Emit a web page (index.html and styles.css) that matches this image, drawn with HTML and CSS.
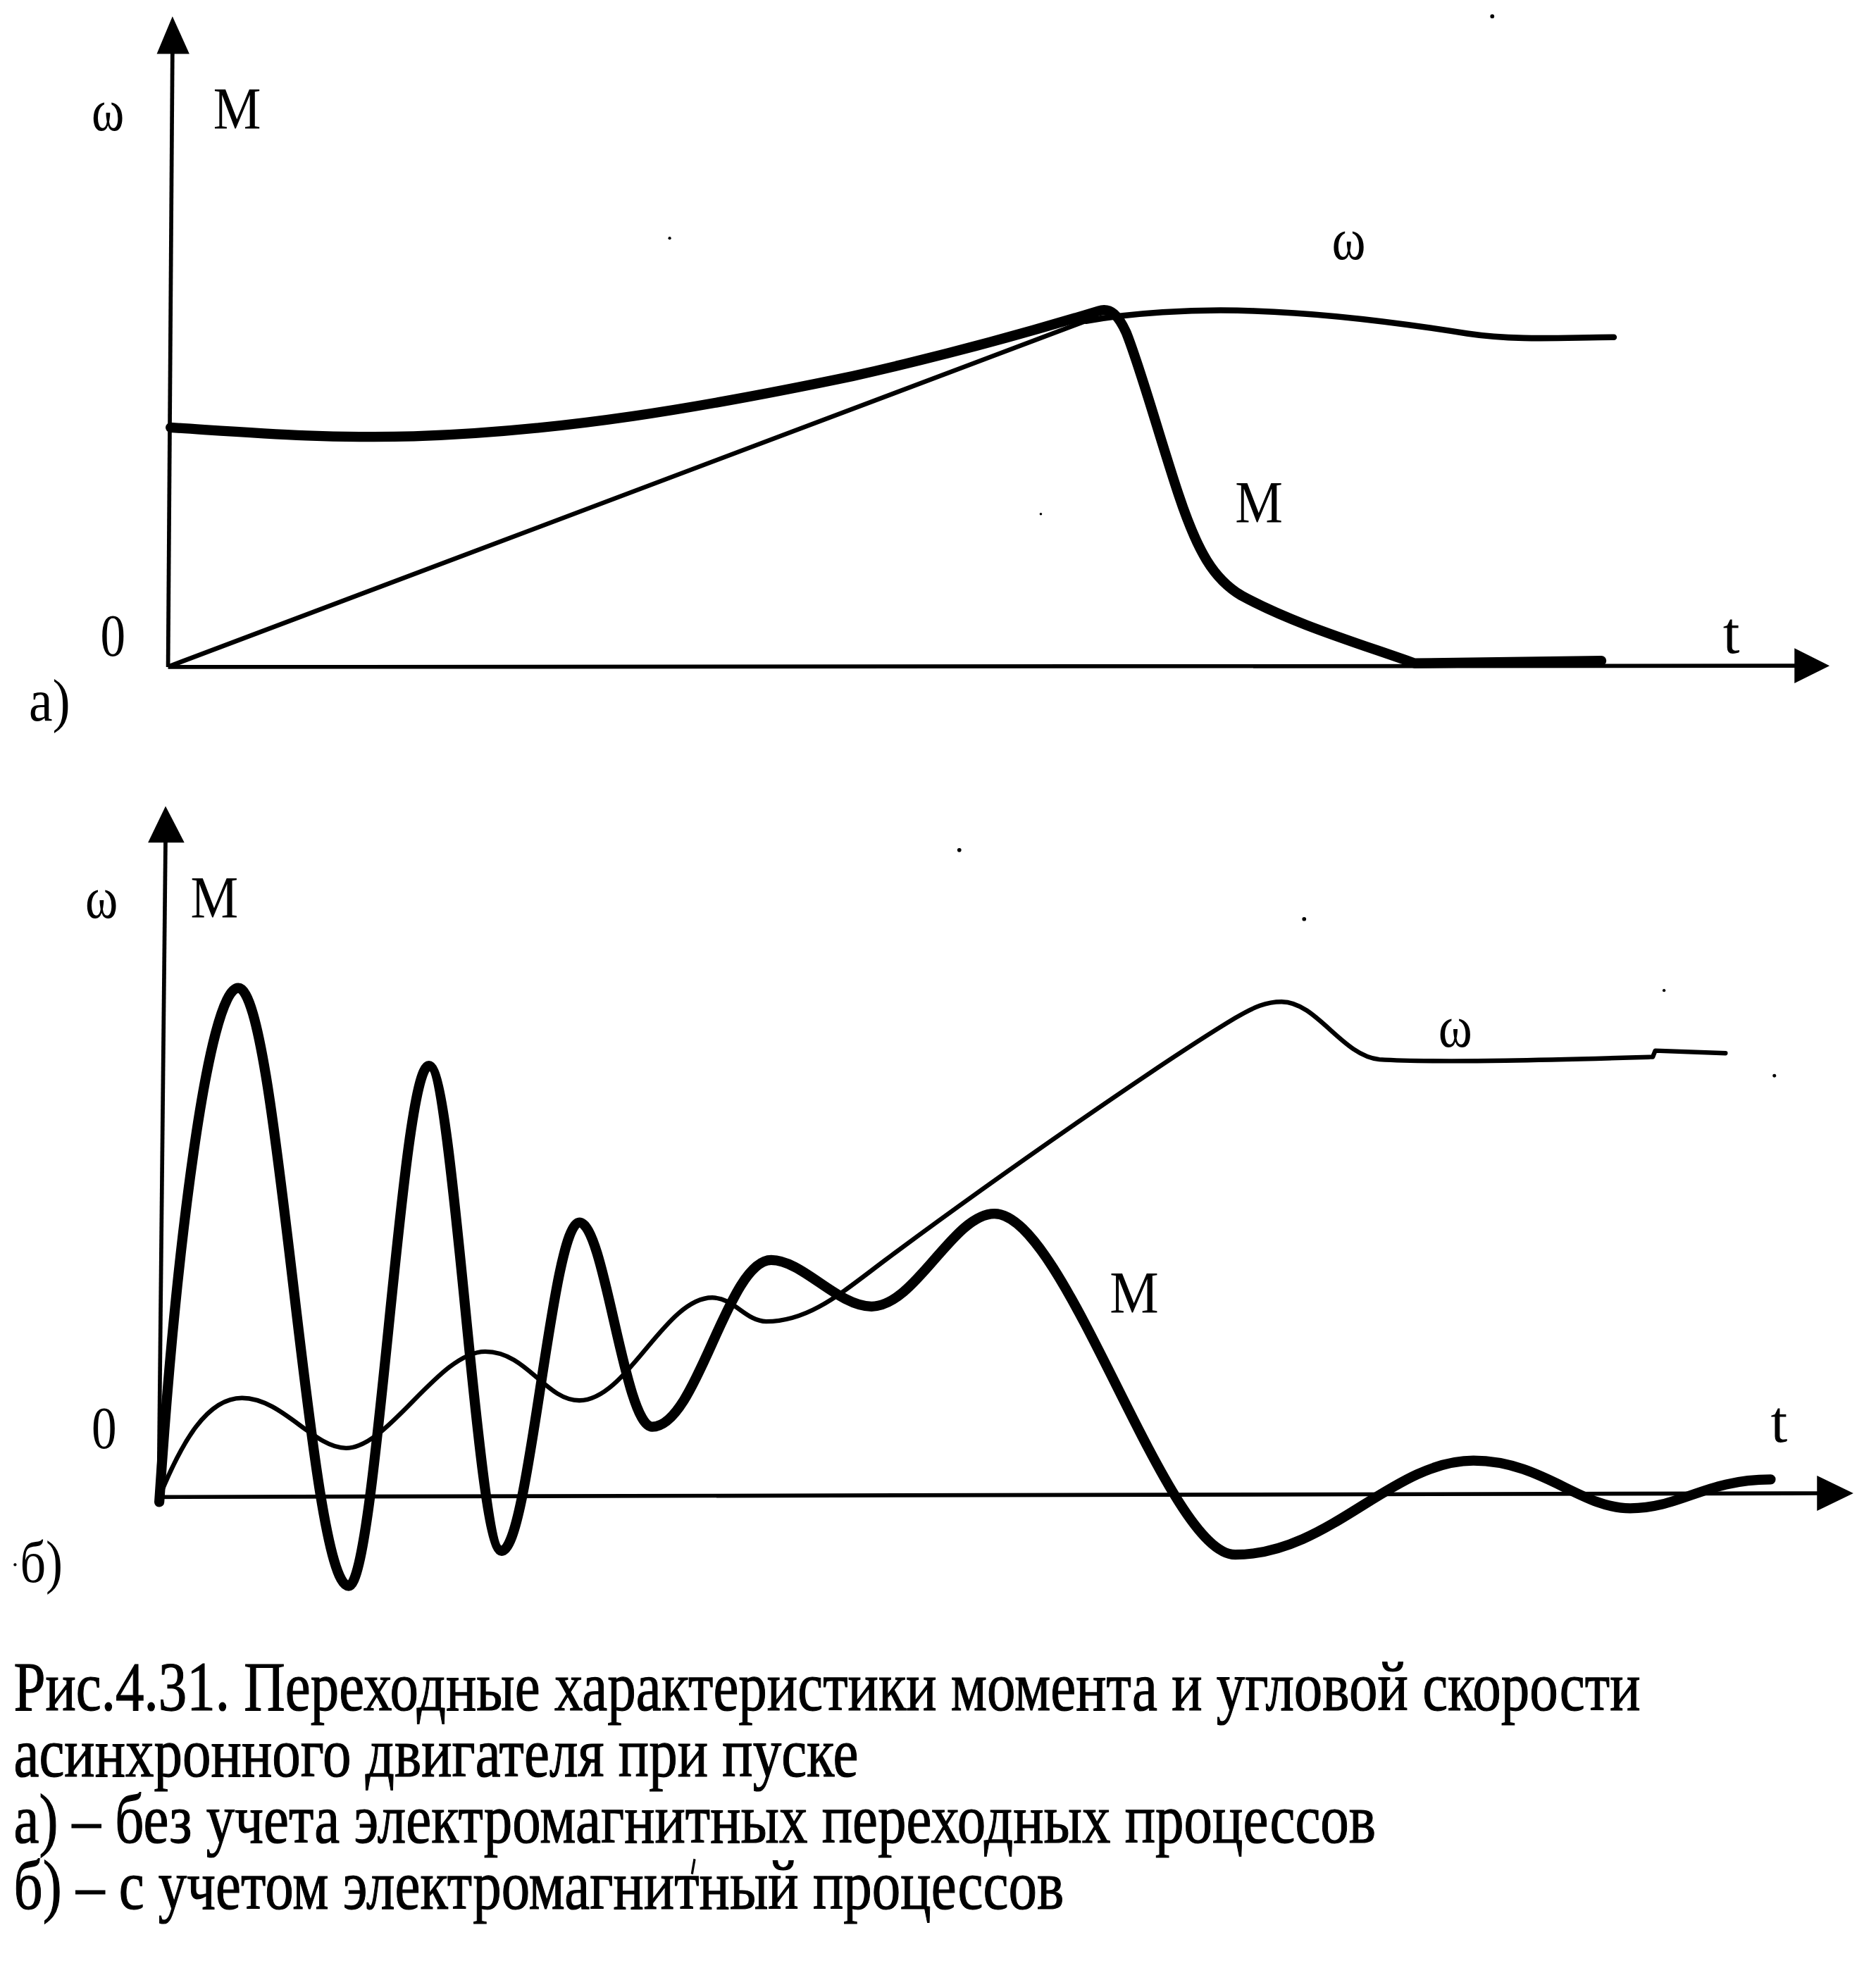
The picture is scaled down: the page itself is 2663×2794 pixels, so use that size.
FILE: index.html
```html
<!DOCTYPE html>
<html lang="ru">
<head>
<meta charset="utf-8">
<title>Рис.4.31</title>
<link rel="stylesheet" href="styles.css">
</head>
<body>
<figure class="fig">
  <svg class="chart chart-a" viewBox="0 0 1496 600" xmlns="http://www.w3.org/2000/svg">
    <line class="axis" x1="137.5" y1="40" x2="134" y2="532"/>
    <polygon class="arrow" points="137.5,13 125,43 151,43"/>
    <line class="axis" x1="134" y1="532" x2="1436" y2="531"/>
    <polygon class="arrow" points="1459,531 1431,517 1431,545"/>
    <path class="curve-w" d="M136,531 L866,256"/>
    <path class="curve-w2" d="M866,256 C900,250 950,246 1000,248 C1060,250 1120,258 1170,266 C1210,272 1250,269 1287,269"/>
    <path class="curve-m" d="M136,341 C200,345 260,350 330,348 C450,344 560,325 680,300 C760,282 830,262 876,248 C886,245 892,252 898,265 C910,295 925,350 940,395 C955,440 968,462 990,475 C1030,497 1080,512 1128,529 L1277,527"/>
    <text class="lbl" x="73" y="104" textLength="26" lengthAdjust="spacingAndGlyphs">ω</text>
    <text class="lbl" x="170" y="103" textLength="38" lengthAdjust="spacingAndGlyphs">M</text>
    <text class="lbl" x="80" y="523" textLength="20" lengthAdjust="spacingAndGlyphs">0</text>
    <text class="lbl" x="23" y="575" textLength="33" lengthAdjust="spacingAndGlyphs">а)</text>
    <text class="lbl" x="1374" y="521">t</text>
    <text class="lbl" x="1062" y="207" textLength="27" lengthAdjust="spacingAndGlyphs">ω</text>
    <text class="lbl" x="985" y="417" textLength="38" lengthAdjust="spacingAndGlyphs">M</text>
    <circle class="speck" cx="1190" cy="13" r="1.6"/>
    <circle class="speck" cx="534" cy="190" r="1.2"/>
    <circle class="speck" cx="830" cy="410" r="1"/>
  </svg>
  <svg class="chart chart-b" viewBox="0 600 1496 700" xmlns="http://www.w3.org/2000/svg">
    <line class="axis" x1="132" y1="668" x2="126.5" y2="1196"/>
    <polygon class="arrow" points="132,643 118,672 147,672"/>
    <line class="axis" x1="126" y1="1194" x2="1452" y2="1191"/>
    <polygon class="arrow" points="1478,1191 1449,1177 1449,1205"/>
    <path class="curve-w" d="M127,1194 C145,1150 165,1115 193,1115 C225,1115 250,1155 276,1155 C310,1155 350,1078 387,1078 C420,1078 435,1117 462,1117 C500,1117 530,1035 568,1035 C585,1035 595,1054 611,1054 C645,1054 670,1032 706,1005 C800,935 930,845 985,812 C1000,803 1010,799 1022,799 C1050,799 1070,842 1100,845 C1150,848 1250,845 1318,843 L1320,838 L1376,840"/>
    <path class="curve-m" d="M127,1198 C140,1000 166,788 190,788 C222,788 246,1265 278,1265 C300,1265 320,850 342,850 C362,850 380,1237 400,1237 C422,1237 440,975 462,975 C482,975 498,1138 520,1138 C556,1138 580,1005 615,1005 C640,1005 668,1042 695,1042 C730,1042 760,968 793,968 C850,968 930,1240 985,1240 C1060,1240 1110,1165 1175,1165 C1230,1165 1260,1203 1300,1203 C1340,1203 1360,1180 1412,1180"/>
    <text class="lbl" x="68" y="732" textLength="26" lengthAdjust="spacingAndGlyphs">ω</text>
    <text class="lbl" x="152" y="732" textLength="38" lengthAdjust="spacingAndGlyphs">M</text>
    <text class="lbl" x="73" y="1155" textLength="20" lengthAdjust="spacingAndGlyphs">0</text>
    <text class="lbl" x="16" y="1262" textLength="34" lengthAdjust="spacingAndGlyphs">б)</text>
    <text class="lbl" x="1412" y="1150">t</text>
    <text class="lbl" x="1147" y="835" textLength="27" lengthAdjust="spacingAndGlyphs">ω</text>
    <text class="lbl" x="885" y="1047" textLength="39" lengthAdjust="spacingAndGlyphs">M</text>
    <circle class="speck" cx="765" cy="678" r="1.6"/>
    <circle class="speck" cx="1040" cy="733" r="1.6"/>
    <circle class="speck" cx="1327" cy="790" r="1.2"/>
    <circle class="speck" cx="1415" cy="858" r="1.4"/>
    <circle class="speck" cx="12" cy="1248" r="1.2"/>
  </svg>
  <figcaption class="caption">
    <p class="line">Рис.4.31. Переходные характеристики момента и угловой скорости</p>
    <p class="line">асинхронного двигателя при пуске</p>
    <p class="line">а) – без учета электромагнитных переходных процессов</p>
    <p class="line">б) – с учетом электромагни<span class="acc">т</span>ный процессов</p>
  </figcaption>
</figure>
</body>
</html>
```

FILE: styles.css
```css
html, body {
  margin: 0;
  padding: 0;
  background: #ffffff;
}

body {
  width: 2663px;
  height: 2794px;
  overflow: hidden;
  font-family: "Liberation Serif", "Times New Roman", serif;
  color: #000;
}

.fig {
  margin: 0;
  display: flex;
  flex-direction: column;
}

.chart {
  display: block;
  width: 2663px;
}

.chart-a {
  height: 1068px;
}

.chart-b {
  height: 1246px;
}

.axis {
  stroke: #000;
  stroke-width: 3.2;
  stroke-linecap: butt;
}

.arrow {
  fill: #000;
}

.curve-m {
  fill: none;
  stroke: #000;
  stroke-width: 8;
  stroke-linecap: round;
  stroke-linejoin: round;
}

.curve-w {
  fill: none;
  stroke: #000;
  stroke-width: 3.6;
  stroke-linecap: round;
  stroke-linejoin: round;
}

.curve-w2 {
  fill: none;
  stroke: #000;
  stroke-width: 4.8;
  stroke-linecap: round;
  stroke-linejoin: round;
}

.lbl {
  font-family: "Liberation Serif", "Times New Roman", serif;
  font-size: 48px;
  fill: #000;
}

.speck {
  fill: #000;
}

.caption {
  padding: 34px 0 0 24px;
  transform: scaleX(0.81);
  transform-origin: left top;
}

.line {
  margin: 0;
  font-size: 100px;
  line-height: 94px;
  white-space: nowrap;
  -webkit-text-stroke: 1.2px #000;
}

.acc {
  position: relative;
}

.acc::after {
  content: "";
  position: absolute;
  left: 72%;
  top: 18px;
  width: 4px;
  height: 22px;
  background: #000;
  transform: rotate(12deg);
}
```
